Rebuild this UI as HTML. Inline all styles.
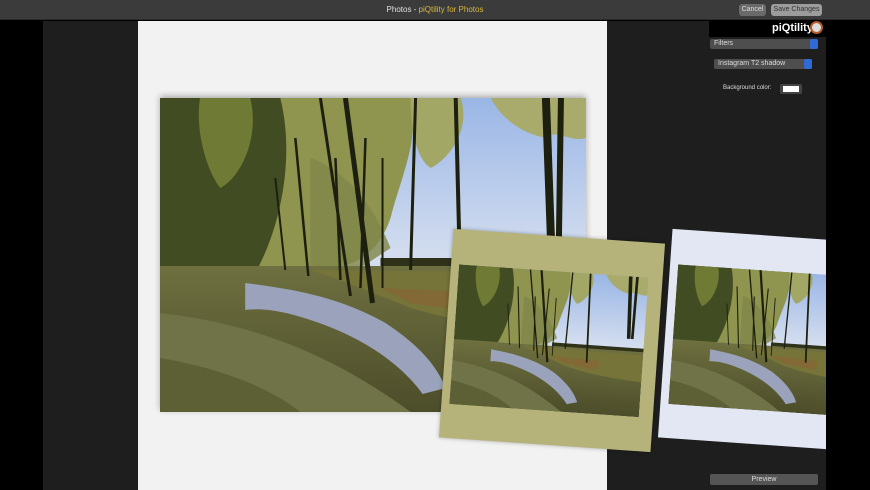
<!DOCTYPE html>
<html><head><meta charset="utf-8"><style>
*{margin:0;padding:0;box-sizing:border-box}
body{width:870px;height:490px;overflow:hidden;background:#000;font-family:"Liberation Sans",sans-serif;position:relative}
.abs{position:absolute}
.btn{position:absolute;top:4px;height:12px;border-radius:3px;font-size:7px;line-height:12px;text-align:center;color:#333}
</style></head><body>
<svg width="0" height="0" style="position:absolute">
<defs>
<linearGradient id="sky" x1="0" y1="0" x2="0" y2="1"><stop offset="0" stop-color="#9ab6e6"/><stop offset="0.5" stop-color="#d3ddef"/><stop offset="1" stop-color="#eef0f2"/></linearGradient>
<linearGradient id="grass" x1="0" y1="0" x2="0" y2="1"><stop offset="0" stop-color="#6e7040"/><stop offset="1" stop-color="#4c4d2a"/></linearGradient>
<symbol id="scene" viewBox="0 0 425 314" preserveAspectRatio="none">
<rect width="425" height="314" fill="url(#sky)"/>
<path d="M0 0H250C260 40 240 80 230 120C220 150 200 165 180 168H0Z" fill="#8f944f"/>
<path d="M250 0H300C310 30 290 60 270 70C255 60 250 30 250 0Z" fill="#a2a765"/>
<path d="M330 0H425V40C410 45 395 30 385 40C360 35 340 20 330 0Z" fill="#a9ab6c"/>
<path d="M0 0H120C135 60 120 130 95 175H0Z" fill="#414c23"/>
<path d="M40 0H90C100 40 80 80 60 90C45 70 35 30 40 0Z" fill="#6f7a35"/>
<path d="M150 60C180 70 210 100 230 150L200 170L150 168Z" fill="#7f8648" opacity=".8"/>
<rect x="220" y="160" width="205" height="10" fill="#2e3219"/>
<path d="M0 168H425V314H0Z" fill="url(#grass)"/>
<path d="M150 172L425 175V235C360 232 300 225 250 210C220 198 190 185 150 172Z" fill="#767438"/>
<path d="M220 190L330 195L320 215L250 205Z" fill="#9a5630" opacity=".35"/>
<path d="M85 185C140 192 180 200 225 225C255 245 275 265 285 290L262 296C240 265 200 238 150 222C120 212 100 210 85 212Z" fill="#9aa3bb"/>
<path d="M0 215C90 225 170 255 250 314H0Z" fill="#707347"/>
<path d="M0 260C60 270 110 290 140 314H0Z" fill="#5d6035"/>
<g stroke="#1d200f" fill="none">
<path d="M385 0L390 140" stroke-width="8"/><path d="M400 0L398 140" stroke-width="6"/>
<path d="M185 0L212 205" stroke-width="5"/><path d="M160 0L190 198" stroke-width="3"/>
<path d="M295 0L300 200" stroke-width="4"/><path d="M255 0L250 172" stroke-width="3"/>
<path d="M135 40L148 178" stroke-width="2.5"/><path d="M115 80L125 172" stroke-width="2"/>
<path d="M175 60L180 182" stroke-width="2.5"/><path d="M205 40L200 190" stroke-width="2.5"/>
<path d="M222 60L222 190" stroke-width="2"/>
</g>
</symbol>
</defs>
</svg>
<div class="abs" style="left:0;top:0;width:870px;height:20px;background:#3b3b3b;border-bottom:1px solid #2a2a2a"></div>
<div class="abs" style="left:0;top:5px;width:870px;text-align:center;font-size:8px;color:#e0e0e0">Photos - <span style="color:#d8b83a">piQtility for Photos</span></div>
<div class="btn" style="left:739px;width:27px;background:#6a6a6a;color:#ddd">Cancel</div>
<div class="btn" style="left:771px;width:51px;background:#9c9c9c;color:#333">Save Changes</div>
<div class="abs" style="left:43px;top:21px;width:783px;height:469px;background:#1e1e1e"></div>
<div class="abs" style="left:138px;top:21px;width:469px;height:469px;background:#f2f2f2"></div>
<div class="abs" style="left:709px;top:21px;width:117px;height:16px;background:#000"></div>
<div class="abs" style="left:772px;top:22px;font-size:11px;font-weight:bold;color:#fff">piQtility</div>
<div class="abs" style="left:810px;top:21px;width:13px;height:13px;border-radius:50%;border:2px solid #b55a2a;background:#ddd"></div>
<div class="abs" style="left:710px;top:39px;width:108px;height:10px;background:#4e4e4e;border-radius:2px;font-size:7px;color:#ddd;line-height:10px;padding-left:4px">Filters</div>
<div class="abs" style="left:810px;top:39px;width:8px;height:10px;background:#2f6ad6;border-radius:2px"></div>
<div class="abs" style="left:714px;top:59px;width:98px;height:10px;background:#4e4e4e;border-radius:2px;font-size:7px;color:#ddd;line-height:10px;padding-left:4px">Instagram T2 shadow</div>
<div class="abs" style="left:804px;top:59px;width:8px;height:10px;background:#2f6ad6;border-radius:2px"></div>
<div class="abs" style="left:723px;top:85px;font-size:6px;color:#ddd">Background color:</div>
<div class="abs" style="left:780px;top:84px;width:22px;height:10px;background:#444;border-radius:2px"></div>
<div class="abs" style="left:783px;top:86px;width:16px;height:6px;background:#fff"></div>
<div class="abs" style="left:710px;top:474px;width:108px;height:11px;background:#555;border-radius:2px;font-size:7px;color:#ddd;text-align:center;line-height:11px">Preview</div>
<div class="abs" style="left:160px;top:98px;width:426px;height:314px;box-shadow:0 -2px 6px rgba(0,0,0,.3)"><svg width="426" height="314"><use href="#scene" width="426" height="314"/></svg></div>
<div class="abs" style="left:446px;top:236px;width:212px;height:209px;background:#b5b27a;transform:rotate(4deg);box-shadow:0 0 4px rgba(0,0,0,.3)">
<div class="abs" style="left:8px;top:35px;width:190px;height:140px"><svg width="190" height="140"><use href="#scene" width="190" height="140"/></svg></div></div>
<div class="abs" style="left:607px;top:21px;width:219px;height:469px;overflow:hidden">
<div class="abs" style="left:58px;top:215px;width:212px;height:209px;background:#e3e7f4;transform:rotate(4deg)">
<div class="abs" style="left:8px;top:35px;width:190px;height:140px"><svg width="190" height="140"><use href="#scene" width="190" height="140"/></svg></div></div></div>
</body></html>
